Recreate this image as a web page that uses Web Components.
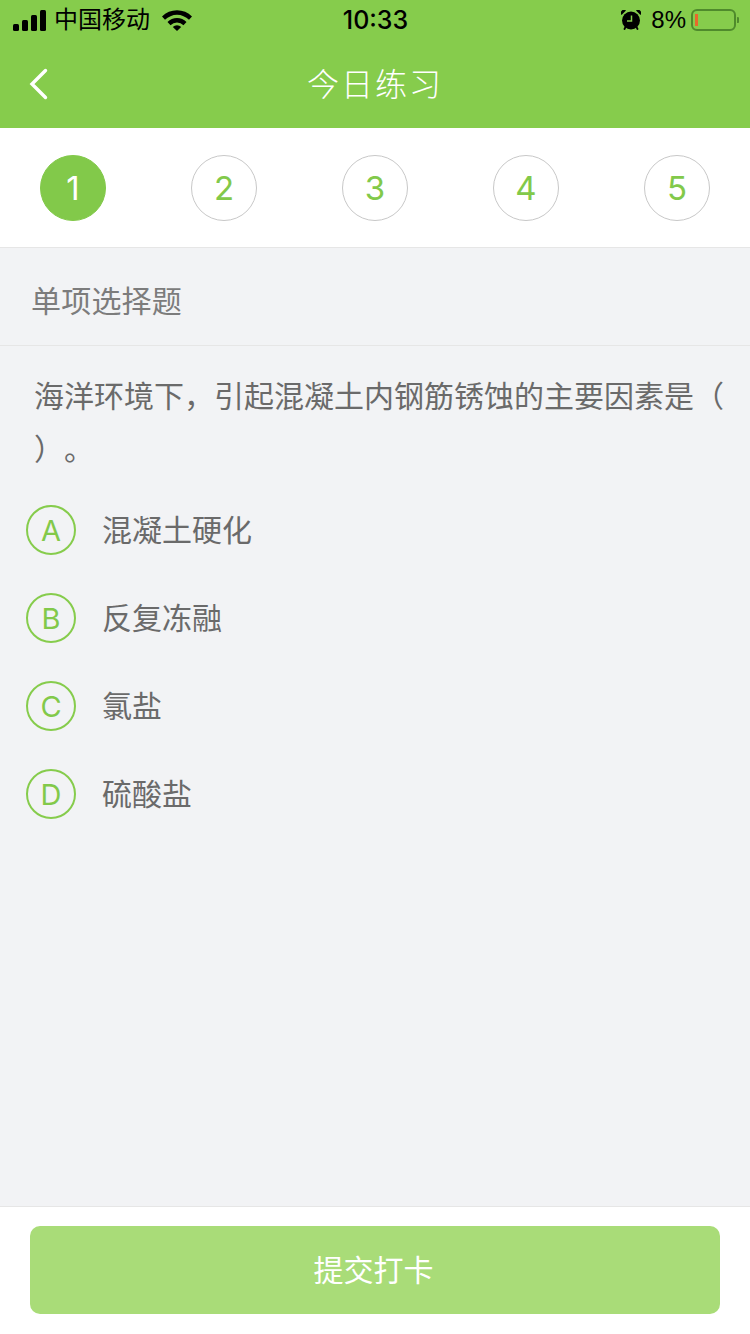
<!DOCTYPE html>
<html lang="zh">
<head>
<meta charset="utf-8">
<title>今日练习</title>
<style>
html, body { margin: 0; padding: 0; }
body {
    width: 750px;
    height: 1334px;
    overflow: hidden;
    font-family: "Liberation Sans", "Noto Sans CJK SC", sans-serif;
}
</style>
</head>
<body>
<practice-app></practice-app>

<script>
const CJK = '"Liberation Sans", "Noto Sans CJK SC", sans-serif';

class StatusBar extends HTMLElement {
    constructor() {
        super();
        this.shadowDOM = this.attachShadow({mode: "open"});
        this.shadowDOM.innerHTML = `
        <style>
        :host {
            display: grid;
            grid-template-columns: 1fr auto 1fr;
            align-items: center;
            height: 40px;
            padding: 0 11px 0 13px;
            color: #000;
            font-family: ${CJK};
        }
        .left, .right { display: flex; align-items: center; }
        .right { justify-content: flex-end; }
        .carrier { font-size: 24px; margin-left: 7px; line-height: 40px; }
        .wifi { margin-left: 12px; }
        .time { font-size: 25px; font-weight: 500; font-family: Inter, sans-serif; margin-left: -1px; }
        .alarm { margin-right: 10px; }
        .pct { font-size: 24px; font-family: "Liberation Sans", sans-serif; margin-right: 5px; }
        </style>
        <div class="left">
            <svg width="34" height="21" viewBox="0 0 34 21">
                <rect x="0" y="14" width="6" height="7" rx="1.5"/>
                <rect x="9" y="10" width="6" height="11" rx="1.5"/>
                <rect x="18" y="5" width="6" height="16" rx="1.5"/>
                <rect x="27" y="0" width="6" height="21" rx="1.5"/>
            </svg>
            <span class="carrier">中国移动</span>
            <svg class="wifi" width="30" height="22" viewBox="0 0 30 22">
                <path d="M0 7.5 A21 21 0 0 1 30 7.5 L27 10.8 A17 17 0 0 0 3 10.8 Z"/>
                <path d="M5.5 13 A13.5 13.5 0 0 1 24.5 13 L21.5 16.2 A9 9 0 0 0 8.5 16.2 Z"/>
                <path d="M10.8 18 A6 6 0 0 1 19.2 18 L15 22 Z"/>
            </svg>
        </div>
        <div class="time">10:33</div>
        <div class="right">
            <svg class="alarm" width="20" height="20" viewBox="0 0 20 20">
                <circle cx="10" cy="10.5" r="9"/>
                <path d="M0.5 5 L5 0.5 A3.2 3.2 0 0 0 0.5 5 Z M19.5 5 L15 0.5 A3.2 3.2 0 0 1 19.5 5 Z"/>
                <path d="M4.5 17 L3.5 19 M15.5 17 L16.5 19" stroke="#000" stroke-width="1.8" stroke-linecap="round"/>
                <path d="M10.5 5.5 V11 H6" fill="none" stroke="#86cc4c" stroke-width="1.5"/>
            </svg>
            <span class="pct">8%</span>
            <svg width="48" height="22" viewBox="0 0 48 22">
                <rect x="1" y="1" width="43" height="20" rx="5" fill="none" stroke="#4f8a2c" stroke-width="2"/>
                <rect x="4" y="5" width="3" height="12" fill="#e8692c"/>
                <path d="M46 8 A3 3 0 0 1 46 14 Z" fill="#4f8a2c"/>
            </svg>
        </div>`;
    }
}

class NavBar extends HTMLElement {
    constructor() {
        super();
        this.shadowDOM = this.attachShadow({mode: "open"});
        this.shadowDOM.innerHTML = `
        <style>
        :host {
            display: flex;
            align-items: center;
            justify-content: center;
            position: relative;
            height: 88px;
            color: #fff;
            font-family: ${CJK};
        }
        .back { position: absolute; left: 29px; top: 28px; }
        .title { font-size: 32px; font-weight: 300; letter-spacing: 2px; line-height: 88px; margin-top: 2px; }
        </style>
        <svg class="back" width="20" height="32" viewBox="0 0 20 32">
            <path d="M16.5 2.5 L3 16 L16.5 29.5" fill="none" stroke="#fff" stroke-width="3.4" stroke-linecap="round"/>
        </svg>
        <div class="title"><slot></slot></div>`;
    }
}

class StepDot extends HTMLElement {
    constructor() {
        super();
        this.shadowDOM = this.attachShadow({mode: "open"});
        this.shadowDOM.innerHTML = `
        <style>
        :host {
            display: flex;
            align-items: center;
            justify-content: center;
            box-sizing: border-box;
            width: 66px;
            height: 66px;
            border-radius: 50%;
            border: 1px solid #c8c8c8;
            color: #82c94a;
            font-size: 33px;
            font-family: Inter, sans-serif;
        }
        :host([active]) {
            background: #82c94a;
            border-color: #82c94a;
            color: #fff;
        }
        </style>
        <slot></slot>`;
    }
}

class StepRow extends HTMLElement {
    constructor() {
        super();
        this.shadowDOM = this.attachShadow({mode: "open"});
        this.shadowDOM.innerHTML = `
        <style>
        :host {
            display: flex;
            justify-content: space-between;
            align-items: center;
            height: 119px;
            padding: 0 40px;
            box-sizing: content-box;
            background: #fff;
            border-bottom: 1px solid #e6e6e6;
        }
        </style>
        <slot></slot>`;
    }
}

class OptionItem extends HTMLElement {
    constructor() {
        super();
        this.shadowDOM = this.attachShadow({mode: "open"});
        this.shadowDOM.innerHTML = `
        <style>
        :host {
            display: flex;
            align-items: center;
            gap: 26px;
            height: 50px;
            color: #6a6a6a;
            font-size: 30px;
            font-family: ${CJK};
        }
        .mark {
            display: flex;
            align-items: center;
            justify-content: center;
            box-sizing: border-box;
            width: 50px;
            height: 50px;
            border-radius: 50%;
            border: 2px solid #86cc4c;
            color: #82c94a;
            font-size: 29px;
            font-family: Inter, sans-serif;
        }
        .label { margin-bottom: 4px; }
        </style>
        <span class="mark">${this.getAttribute("mark")}</span>
        <span class="label"><slot></slot></span>`;
    }
}

class QuestionCard extends HTMLElement {
    constructor() {
        super();
        this.shadowDOM = this.attachShadow({mode: "open"});
        this.shadowDOM.innerHTML = `
        <style>
        :host {
            display: block;
            flex: 1;
            background: #f2f3f5;
            font-family: ${CJK};
        }
        .kind {
            height: 97px;
            line-height: 108px;
            padding-left: 31px;
            font-size: 30px;
            letter-spacing: 0.2px;
            color: #7c7c7c;
            border-bottom: 1px solid #e6e6e6;
            overflow: hidden;
        }
        .stem {
            margin: 0;
            padding: 24px 20px 0 34px;
            font-size: 30px;
            line-height: 53px;
            color: #6a6a6a;
            text-spacing-trim: space-all;
        }
        .options {
            display: flex;
            flex-direction: column;
            gap: 38px;
            padding: 29px 0 0 26px;
        }
        </style>
        <div class="kind"><slot name="kind"></slot></div>
        <p class="stem"><slot name="stem"></slot></p>
        <div class="options"><slot></slot></div>`;
    }
}

class SubmitBar extends HTMLElement {
    constructor() {
        super();
        this.shadowDOM = this.attachShadow({mode: "open"});
        this.shadowDOM.innerHTML = `
        <style>
        :host {
            display: block;
            background: #fff;
            border-top: 1px solid #e6e6e6;
            padding: 19px 30px 20px;
            font-family: ${CJK};
        }
        .btn {
            display: flex;
            align-items: center;
            justify-content: center;
            box-sizing: border-box;
            height: 88px;
            padding: 0 3px 4px 0;
            border-radius: 10px;
            background: #a9dc78;
            color: #fff;
            font-size: 30px;
        }
        </style>
        <div class="btn"><slot></slot></div>`;
    }
}

class PracticeApp extends HTMLElement {
    constructor() {
        super();
        this.shadowDOM = this.attachShadow({mode: "open"});
        this.shadowDOM.innerHTML = `
        <style>
        :host {
            display: flex;
            flex-direction: column;
            height: 1334px;
        }
        .top { background: #86cc4c; }
        </style>
        <div class="top">
            <status-bar></status-bar>
            <nav-bar>今日练习</nav-bar>
        </div>
        <step-row>
            <step-dot active>1</step-dot>
            <step-dot>2</step-dot>
            <step-dot>3</step-dot>
            <step-dot>4</step-dot>
            <step-dot>5</step-dot>
        </step-row>
        <question-card>
            <span slot="kind">单项选择题</span>
            <span slot="stem">海洋环境下，引起混凝土内钢筋锈蚀的主要因素是（ ）。</span>
            <option-item mark="A">混凝土硬化</option-item>
            <option-item mark="B">反复冻融</option-item>
            <option-item mark="C">氯盐</option-item>
            <option-item mark="D">硫酸盐</option-item>
        </question-card>
        <submit-bar>提交打卡</submit-bar>`;
    }
}

customElements.define("status-bar", StatusBar);
customElements.define("nav-bar", NavBar);
customElements.define("step-dot", StepDot);
customElements.define("step-row", StepRow);
customElements.define("option-item", OptionItem);
customElements.define("question-card", QuestionCard);
customElements.define("submit-bar", SubmitBar);
customElements.define("practice-app", PracticeApp);
</script>
</body>
</html>
